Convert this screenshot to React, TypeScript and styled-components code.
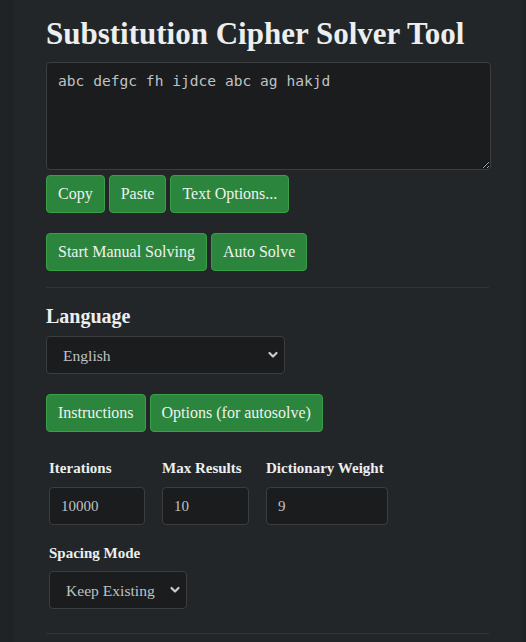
import styled, { createGlobalStyle } from "styled-components";

const GlobalStyle = createGlobalStyle`
  html, body {
    margin: 0;
    padding: 0;
    background: #1f2325;
  }
  body {
    font-family: "Liberation Serif", "DejaVu Serif", serif;
    color: #e9ecef;
  }
`;

const Page = styled.div`
  padding-left: 14px;
  min-height: 642px;
  background: #1f2325;
`;

const Panel = styled.main`
  width: 508px;
  min-height: 642px;
  box-sizing: border-box;
  padding: 14px 32px 0 32px;
  background: #222628;
`;

const Title = styled.h1`
  margin: 0 0 8px;
  font-size: 31px;
  line-height: 40px;
  font-weight: 700;
  color: #eceeef;
  white-space: nowrap;
`;

const CipherText = styled.textarea`
  display: block;
  width: 445px;
  height: 108px;
  box-sizing: border-box;
  padding: 8px 11px;
  background: #1b1c1e;
  border: 1px solid #3a3e41;
  border-radius: 4px;
  color: #bfc2c4;
  font-family: "DejaVu Sans Mono", "Liberation Mono", monospace;
  font-size: 14.6px;
  line-height: 20px;
  resize: vertical;
  outline: none;
`;

const ButtonRow = styled.div<{ $top: number }>`
  display: flex;
  gap: 4px;
  margin-top: ${(p) => p.$top}px;
`;

const Button = styled.button`
  height: 38px;
  padding: 0 11px;
  background: #2c853d;
  border: 1px solid #39a049;
  border-radius: 4px;
  color: #eef2ee;
  font-family: inherit;
  font-size: 16px;
  line-height: 24px;
  cursor: pointer;
`;

const Rule = styled.hr<{ $top: number; $bottom: number }>`
  width: 443px;
  margin: ${(p) => p.$top}px 0 ${(p) => p.$bottom}px;
  border: 0;
  border-top: 1px solid #30353a;
`;

const SectionLabel = styled.div`
  font-size: 20px;
  line-height: 24px;
  font-weight: 700;
  color: #eceeef;
  margin-bottom: 8px;
`;

const SelectWrap = styled.div<{ $width: number }>`
  position: relative;
  width: ${(p) => p.$width}px;
`;

const Select = styled.select<{ $pad: number }>`
  display: block;
  width: 100%;
  height: 38px;
  box-sizing: border-box;
  padding: 0 26px 0 ${(p) => p.$pad}px;
  appearance: none;
  background: #1b1c1e;
  border: 1px solid #3a3e41;
  border-radius: 4px;
  color: #bfc2c4;
  font-family: inherit;
  font-size: 15.6px;
  outline: none;
`;

const Chevron = styled.svg`
  position: absolute;
  right: 6px;
  top: 14px;
  pointer-events: none;
`;

const Options = styled.div`
  padding-left: 3px;
  margin-top: 26px;
`;

const FieldGrid = styled.div`
  display: flex;
  gap: 17px;
`;

const Field = styled.div`
  display: flex;
  flex-direction: column;
  gap: 9px;
`;

const FieldLabel = styled.label`
  font-size: 15px;
  line-height: 20px;
  font-weight: 700;
  color: #eceeef;
  white-space: nowrap;
`;

const NumberInput = styled.input<{ $width: number }>`
  width: ${(p) => p.$width}px;
  height: 38px;
  box-sizing: border-box;
  padding: 0 11px;
  background: #1b1c1e;
  border: 1px solid #3a3e41;
  border-radius: 4px;
  color: #bfc2c4;
  font-family: inherit;
  font-size: 15px;
  outline: none;
`;

const SpacingField = styled(Field)`
  margin-top: 18px;
  gap: 8px;
`;

function Arrow() {
  return (
    <Chevron width="12" height="10" viewBox="0 0 12 10">
      <path d="M2.5 3 L6 6.5 L9.5 3" fill="none" stroke="#c8cacc" strokeWidth="2.2" strokeLinecap="round" strokeLinejoin="round" />
    </Chevron>
  );
}

export default function App() {
  return (
    <Page>
      <GlobalStyle />
      <Panel>
        <Title>Substitution Cipher Solver Tool</Title>
        <CipherText defaultValue="abc defgc fh ijdce abc ag hakjd" spellCheck={false} />
        <ButtonRow $top={5}>
          <Button>Copy</Button>
          <Button>Paste</Button>
          <Button>Text Options...</Button>
        </ButtonRow>
        <ButtonRow $top={20}>
          <Button>Start Manual Solving</Button>
          <Button>Auto Solve</Button>
        </ButtonRow>
        <Rule $top={16} $bottom={16} />
        <SectionLabel>Language</SectionLabel>
        <SelectWrap $width={239}>
          <Select $pad={16} defaultValue="English">
            <option>English</option>
          </Select>
          <Arrow />
        </SelectWrap>
        <ButtonRow $top={20}>
          <Button>Instructions</Button>
          <Button>Options (for autosolve)</Button>
        </ButtonRow>
        <Options>
          <FieldGrid>
            <Field>
              <FieldLabel>Iterations</FieldLabel>
              <NumberInput $width={96} defaultValue="10000" />
            </Field>
            <Field>
              <FieldLabel>Max Results</FieldLabel>
              <NumberInput $width={87} defaultValue="10" />
            </Field>
            <Field>
              <FieldLabel>Dictionary Weight</FieldLabel>
              <NumberInput $width={122} defaultValue="9" />
            </Field>
          </FieldGrid>
          <SpacingField>
            <FieldLabel>Spacing Mode</FieldLabel>
            <SelectWrap $width={138}>
              <Select $pad={16} defaultValue="Keep Existing">
                <option>Keep Existing</option>
              </Select>
              <Arrow />
            </SelectWrap>
          </SpacingField>
        </Options>
        <Rule $top={24} $bottom={0} />
      </Panel>
    </Page>
  );
}
